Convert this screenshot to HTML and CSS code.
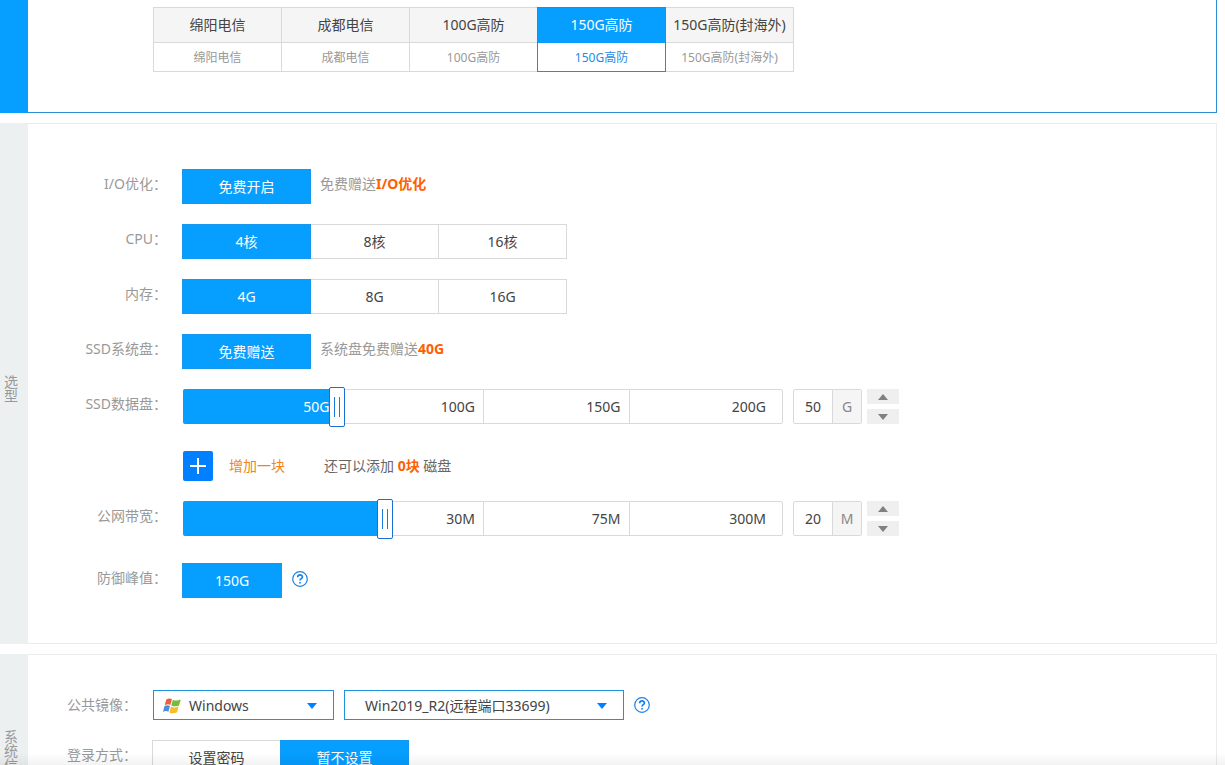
FILE: index.html
```html
<!DOCTYPE html>
<html lang="zh-CN">
<head>
<meta charset="utf-8">
<title>云服务器选购</title>
<link rel="stylesheet" href="styles.css">
</head>
<body>
<main class="page">
  <section class="panel panel-active">
    <div class="side"></div>
    <div class="content content-lines">
      <div class="lines">
        <button class="line" type="button"><span class="line-name">绵阳电信</span><span class="line-sub">绵阳电信</span></button>
        <button class="line" type="button"><span class="line-name">成都电信</span><span class="line-sub">成都电信</span></button>
        <button class="line" type="button"><span class="line-name">100G高防</span><span class="line-sub">100G高防</span></button>
        <button class="line selected" type="button"><span class="line-name">150G高防</span><span class="line-sub">150G高防</span></button>
        <button class="line" type="button"><span class="line-name">150G高防(封海外)</span><span class="line-sub">150G高防(封海外)</span></button>
      </div>
    </div>
  </section>

  <section class="panel">
    <div class="side side-middle"><span class="side-text">选型</span></div>
    <div class="content content-config">
      <div class="row">
        <span class="label">I/O优化：</span>
        <div class="options"><button class="option selected" type="button">免费开启</button></div>
        <p class="hint">免费赠送<strong>I/O优化</strong></p>
      </div>
      <div class="row">
        <span class="label">CPU：</span>
        <div class="options">
          <button class="option selected" type="button">4核</button>
          <button class="option" type="button">8核</button>
          <button class="option" type="button">16核</button>
        </div>
      </div>
      <div class="row">
        <span class="label">内存：</span>
        <div class="options">
          <button class="option selected" type="button">4G</button>
          <button class="option" type="button">8G</button>
          <button class="option" type="button">16G</button>
        </div>
      </div>
      <div class="row">
        <span class="label">SSD系统盘：</span>
        <div class="options"><button class="option selected" type="button">免费赠送</button></div>
        <p class="hint">系统盘免费赠送<strong>40G</strong></p>
      </div>
      <div class="row">
        <label class="label" for="disk">SSD数据盘：</label>
        <div class="slider">
          <div class="fill" style="width:26%"></div>
          <div class="scale"><span class="covered">50G</span><span>100G</span><span>150G</span><span>200G</span></div>
          <input class="range" id="disk" type="range" min="0" max="200" value="50">
        </div>
        <div class="amount">
          <input class="amount-input" type="text" value="50" aria-label="数据盘容量"><span class="unit">G</span>
        </div>
        <div class="steps">
          <button class="step" type="button" aria-label="增加"><svg width="10" height="6" viewBox="0 0 10 6"><path d="M5 0l5 6H0z"/></svg></button>
          <button class="step" type="button" aria-label="减少"><svg width="10" height="6" viewBox="0 0 10 6"><path d="M5 6L0 0h10z"/></svg></button>
        </div>
      </div>
      <div class="row row-add">
        <button class="add" type="button" aria-label="增加一块"><svg width="16" height="16" viewBox="0 0 16 16"><path d="M8 0v16M0 8h16"/></svg></button>
        <span class="add-text">增加一块</span>
        <span class="add-left">还可以添加 <strong>0块</strong> 磁盘</span>
      </div>
      <div class="row">
        <label class="label" for="bandwidth">公网带宽：</label>
        <div class="slider">
          <div class="fill" style="width:33%"></div>
          <div class="scale"><span></span><span>30M</span><span>75M</span><span>300M</span></div>
          <input class="range" id="bandwidth" type="range" min="0" max="100" step="any" value="33.22">
        </div>
        <div class="amount">
          <input class="amount-input" type="text" value="20" aria-label="带宽"><span class="unit">M</span>
        </div>
        <div class="steps">
          <button class="step" type="button" aria-label="增加"><svg width="10" height="6" viewBox="0 0 10 6"><path d="M5 0l5 6H0z"/></svg></button>
          <button class="step" type="button" aria-label="减少"><svg width="10" height="6" viewBox="0 0 10 6"><path d="M5 6L0 0h10z"/></svg></button>
        </div>
      </div>
      <div class="row row-peak">
        <span class="label">防御峰值：</span>
        <div class="options"><button class="option option-small selected" type="button">150G</button></div>
        <svg class="help" width="16" height="16" viewBox="0 0 16 16"><circle cx="8" cy="8" r="7.3"/><path class="mark" d="M5.7 6.2C5.7 3.2 10.4 3.300 10.400 6C10.400 7.700 8 7.700 8 9.600M8 11v1.600"/></svg>
      </div>
    </div>
  </section>

  <section class="panel">
    <div class="side side-top"><span class="side-text">系统信息</span></div>
    <div class="content content-system">
      <div class="row row-image">
        <label class="label" for="os">公共镜像：</label>
        <div class="picker picker-os">
          <svg class="flag" width="18" height="16" viewBox="0 0 18 16">
            <path fill="#e8603c" d="M3.300 1.600C5 .2 7.200 0 9 1.200L7.300 7C5.600 5.900 3.700 6.100 1.700 7.300z"/>
            <path fill="#79b93c" d="M9.900 1.700c2.500 1.300 5 1.200 7.900-.2L16 7.400c-2.600 1.300-5.100 1.200-7.700.1z"/>
            <path fill="#4b8fdb" d="M1.400 8.200c2-1.200 3.900-1.300 5.600-.2L5.400 13.800C3.700 12.700 1.900 12.800 0 14z"/>
            <path fill="#f8bd28" d="M8 8.500c2.500 1.200 5 1.200 7.700-.1L14 14.300c-2.700 1.400-5.200 1.300-7.700.1z"/>
          </svg>
          <select class="select" id="os"><option>Windows</option></select>
          <svg class="caret" width="10" height="6" viewBox="0 0 10 6"><path d="M5 6L0 0h10z"/></svg>
        </div>
        <div class="picker picker-version">
          <select class="select" aria-label="镜像版本"><option>Win2019_R2(远程端口33699)</option></select>
          <svg class="caret" width="10" height="6" viewBox="0 0 10 6"><path d="M5 6L0 0h10z"/></svg>
        </div>
        <svg class="help" width="16" height="16" viewBox="0 0 16 16"><circle cx="8" cy="8" r="7.3"/><path class="mark" d="M5.7 6.2C5.7 3.2 10.4 3.300 10.400 6C10.400 7.700 8 7.700 8 9.600M8 11v1.600"/></svg>
      </div>
      <div class="row">
        <span class="label">登录方式：</span>
        <div class="options">
          <button class="option" type="button">设置密码</button>
          <button class="option selected" type="button">暂不设置</button>
        </div>
      </div>
    </div>
  </section>
</main>
<div class="fade"></div>
</body>
</html>
```
FILE: styles.css
```css
* { box-sizing: border-box; }

body {
  margin: 0;
  height: 100vh;
  overflow: hidden;
  background: #fff;
  color: #444;
  font: 14px/20px "Noto Sans", "Noto Sans CJK SC", sans-serif;
}

button, input, select {
  margin: 0;
  padding: 0;
  border: 0;
  border-radius: 0;
  background: none;
  color: inherit;
  font: inherit;
}

p { margin: 0; }
strong { color: #ff6000; font-weight: 700; }

.page {
  display: flex;
  flex-direction: column;
  gap: 10px;
  padding-right: 8px;
}

.panel { display: flex; }

.side {
  display: flex;
  justify-content: center;
  flex: none;
  width: 28px;
  padding-right: 6px;
  background: #ecf0f1;
  color: #999;
}
.side-middle { align-items: center; padding-top: 10px; }
.side-top { padding-top: 76px; }
.side-text { width: 14px; line-height: 14px; }

.content {
  flex: 1;
  min-width: 0;
  border: 1px solid #ebebeb;
  border-left: 0;
}

.panel-active .side { background: #069eff; }
.panel-active .content { border-color: #2a8fd6; border-top: 0; }

.content-lines { padding: 7px 0 40px 125px; }
.lines { display: flex; }
.line {
  display: flex;
  flex-direction: column;
  width: 129px;
  margin-right: -1px;
  border: 1px solid #d9d9d9;
  white-space: nowrap;
}
.line-name {
  width: 100%;
  line-height: 34px;
  border-bottom: 1px solid #d9d9d9;
  background: #f5f5f5;
}
.line-sub {
  width: 100%;
  padding-top: 2px;
  line-height: 26px;
  font-size: 12px;
  color: #999;
}
.line.selected { position: relative; border-color: #1e8fdc; }
.line.selected .line-name { border-color: #069eff; background: #069eff; color: #fff; }
.line.selected .line-sub { color: #1e8be6; }

.content-config {
  display: flex;
  flex-direction: column;
  gap: 20px;
  padding: 45px 0;
}
.row { display: flex; }
.label {
  flex: none;
  width: 139px;
  margin-right: 15px;
  line-height: 30px;
  text-align: right;
  color: #999;
  white-space: nowrap;
}

.options { display: flex; }
.option {
  width: 129px;
  height: 35px;
  margin-right: -1px;
  border: 1px solid #d9d9d9;
}
.option.selected { position: relative; border-color: #1698ee; background: #069eff; color: #fff; }
.option-small { width: 100px; }
.hint { padding-left: 10px; line-height: 30px; color: #999; }

.slider {
  position: relative;
  flex: none;
  width: 600px;
  height: 35px;
  margin-left: 1px;
  border: 1px solid #d9d9d9;
  border-radius: 2px;
}
.fill {
  position: absolute;
  top: -1px;
  bottom: -1px;
  left: -1px;
  border-radius: 2px 0 0 2px;
  background: #069eff;
}
.scale { display: flex; height: 100%; padding: 0 7px 0 9px; }
.scale span {
  flex: 1;
  padding-right: 8px;
  border-right: 1px solid #d9d9d9;
  line-height: 34px;
  text-align: right;
}
.scale span:last-child { border-right-color: transparent; }
.scale .covered { position: relative; border-right-color: transparent; color: #fff; }
.range {
  position: absolute;
  top: -3px;
  left: -1px;
  width: 600px;
  height: 40px;
  appearance: none;
}
.range::-webkit-slider-thumb {
  appearance: none;
  width: 16px;
  height: 40px;
  border: 1px solid #1a6fd0;
  border-radius: 2px;
  background:
    linear-gradient(#1a7ae0, #1a7ae0) 4px 9px / 1px 20px no-repeat,
    linear-gradient(#1a7ae0, #1a7ae0) 9px 9px / 1px 20px no-repeat,
    #fff;
}

.amount {
  display: flex;
  width: 69px;
  height: 35px;
  margin-left: 10px;
  border: 1px solid #d9d9d9;
  border-radius: 2px;
}
.amount-input { width: 39px; border-right: 1px solid #d9d9d9; text-align: center; }
.unit { flex: 1; background: #f5f5f5; line-height: 34px; text-align: center; color: #888; }
.steps { display: flex; flex-direction: column; gap: 5px; margin-left: 5px; }
.step {
  display: flex;
  align-items: center;
  justify-content: center;
  width: 32px;
  height: 15px;
  background: #efefef;
}
.step svg { fill: #808080; }

.row-add {
  align-items: center;
  margin-top: 7px;
  padding-left: 155px;
  color: #666;
}
.add {
  display: flex;
  align-items: center;
  justify-content: center;
  width: 30px;
  height: 30px;
  border-radius: 2px;
  background: #0080ff;
}
.add svg { fill: none; stroke: #fff; stroke-width: 2; }
.add-text { margin-left: 16px; color: #f08519; }
.add-left { margin-left: 39px; }
.row-peak { margin-top: 7px; }

.help {
  align-self: center;
  margin-left: 11px;
  fill: none;
  stroke: #1a80e6;
  stroke-width: 1.2;
}
.help .mark { stroke-width: 1.7; }
.row-peak .help { margin-bottom: 3px; }

.content-system {
  display: flex;
  flex-direction: column;
  gap: 20px;
  padding: 35px 0 84px;
}
.content-system .label { width: 109px; }
.row-image .help { margin-left: 10px; }
.picker { position: relative; height: 30px; border: 1px solid #1e93dc; }
.picker-os { width: 181px; margin-left: 1px; }
.picker-version { width: 280px; margin-left: 10px; }
.select { width: 100%; height: 28px; padding: 1px 0 0 20px; appearance: none; }
.picker-os .select { padding-left: 35px; }
.flag { position: absolute; top: 7px; left: 9px; }
.caret { position: absolute; top: 12px; right: 16px; fill: #0080ff; pointer-events: none; }

.fade {
  position: fixed;
  right: 0;
  bottom: 0;
  left: 0;
  height: 12px;
  background: linear-gradient(rgba(0, 0, 0, 0), rgba(0, 0, 0, 0.05));
  pointer-events: none;
}
```
